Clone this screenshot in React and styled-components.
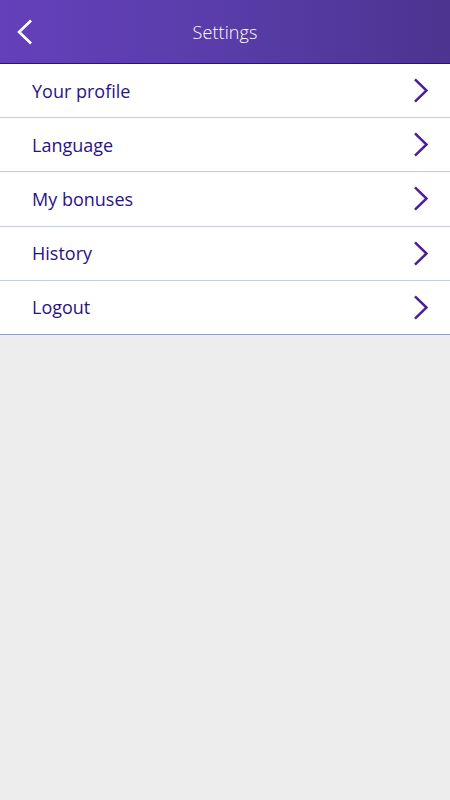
import React from "react";
import styled, { createGlobalStyle } from "styled-components";

const Global = createGlobalStyle`
  html, body { margin: 0; padding: 0; background: #ededed; }
  body { font-family: "Open Sans", "Noto Sans", sans-serif; }
`;

const Page = styled.div`
  width: 450px;
  min-height: 800px;
  background: #ededed;
`;

const Header = styled.header`
  height: 63px;
  border-bottom: 1px solid #2d0f8c;
  background: linear-gradient(90deg, #6440ba 0%, #5a3dab 45%, #4c3490 100%);
  display: grid;
  grid-template-columns: 64px 1fr 64px;
  align-items: center;
`;

const BackButton = styled.button`
  border: 0;
  background: transparent;
  padding: 0 0 0 17px;
  height: 63px;
  display: flex;
  align-items: center;
  cursor: pointer;
`;

const Title = styled.h1`
  margin: 0;
  text-align: center;
  color: #ffffff;
  font-family: "Open Sans", sans-serif;
  font-weight: 300;
  font-size: 18px;
  letter-spacing: 0.1px;
`;

const List = styled.ul`
  list-style: none;
  margin: 0;
  padding: 0;
  background: #fff;
`;

const Row = styled.li`
  box-sizing: border-box;
  height: 54.2px;
  border-bottom: 1.5px solid ${(p) => (p.$last ? "#8c9fea" : "#c2cbf2")};
  display: flex;
  align-items: center;
  justify-content: space-between;
  padding: 0 22px 0 32px;
`;

const Label = styled.span`
  color: #2a1288;
  font-family: "Open Sans", sans-serif;
  font-size: 18px;
  font-weight: 400;
`;

const Chevron = ({ dir = "right", color, size = 26 }) => (
  <svg width={size * 0.62} height={size} viewBox="0 0 16 26" fill="none">
    <path
      d={dir === "right" ? "M2 1.5 L14 13 L2 24.5" : "M14 1.5 L2 13 L14 24.5"}
      stroke={color}
      strokeWidth="2.6"
      strokeLinecap="butt"
      strokeLinejoin="miter"
    />
  </svg>
);

const items = ["Your profile", "Language", "My bonuses", "History", "Logout"];

export default function App() {
  return (
    <Page>
      <Global />
      <Header>
        <BackButton aria-label="Back">
          <Chevron dir="left" color="#ffffff" size={26} />
        </BackButton>
        <Title>Settings</Title>
        <span />
      </Header>
      <List>
        {items.map((t, i) => (
          <Row key={t} $last={i === items.length - 1}>
            <Label>{t}</Label>
            <Chevron dir="right" color="#4b1c9c" size={25} />
          </Row>
        ))}
      </List>
    </Page>
  );
}
